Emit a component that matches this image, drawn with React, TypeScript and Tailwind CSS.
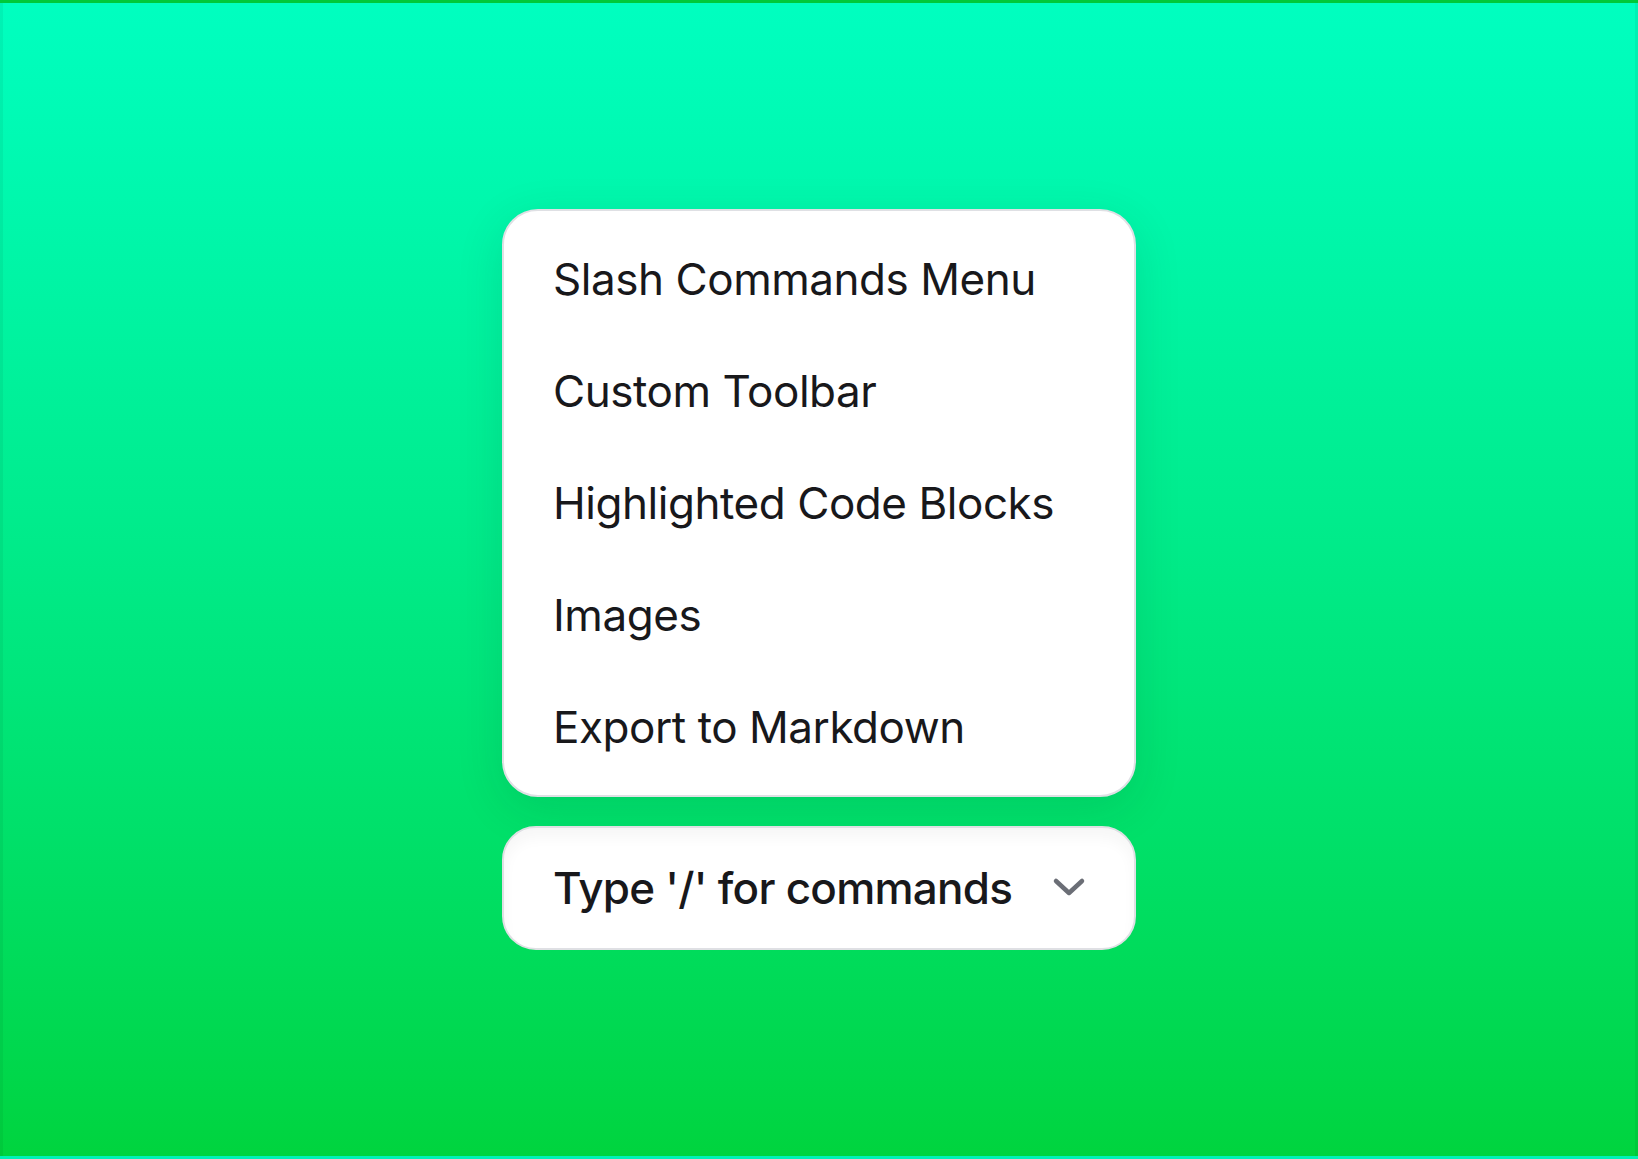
const items = [
  "Slash Commands Menu",
  "Custom Toolbar",
  "Highlighted Code Blocks",
  "Images",
  "Export to Markdown",
];

function Chevron() {
  return (
    <svg width="34" height="22" viewBox="0 0 34 22" fill="none" className="mb-[3px] shrink-0">
      <path
        d="M4 5 L17 17 L30 5"
        stroke="#6b6e76"
        strokeWidth="4.5"
        strokeLinecap="round"
        strokeLinejoin="round"
      />
    </svg>
  );
}

export default function App() {
  return (
    <div
      className="flex h-[1159px] w-full flex-col items-center justify-center gap-[29px] border-[3px] border-[rgba(0,0,0,0.05)] bg-gradient-to-b from-[#00ffc0] to-[#00d43e] text-[#18181b]"
      style={{ fontFamily: "Inter, 'Noto Sans', sans-serif" }}
    >
      <div className="flex w-[634px] flex-col rounded-[36px] border-2 border-[#dfe0e4] bg-white py-3 shadow-[0_12px_48px_rgba(0,60,30,0.12)]">
        {items.map((label) => (
          <div key={label} className="flex h-[112px] items-center pl-[49px] pr-[48px] text-[44px] leading-none tracking-[-0.45px]">
            {label}
          </div>
        ))}
      </div>
      <div className="flex h-[124px] w-[634px] items-center justify-between rounded-[34px] border-2 border-[#dfe0e4] bg-white pl-[49px] pr-[48px] shadow-[inset_0_10px_14px_rgba(0,0,0,0.035)]">
        <span className="text-[44px] font-medium leading-none tracking-[-0.75px]">Type '/' for commands</span>
        <Chevron />
      </div>
    </div>
  );
}
